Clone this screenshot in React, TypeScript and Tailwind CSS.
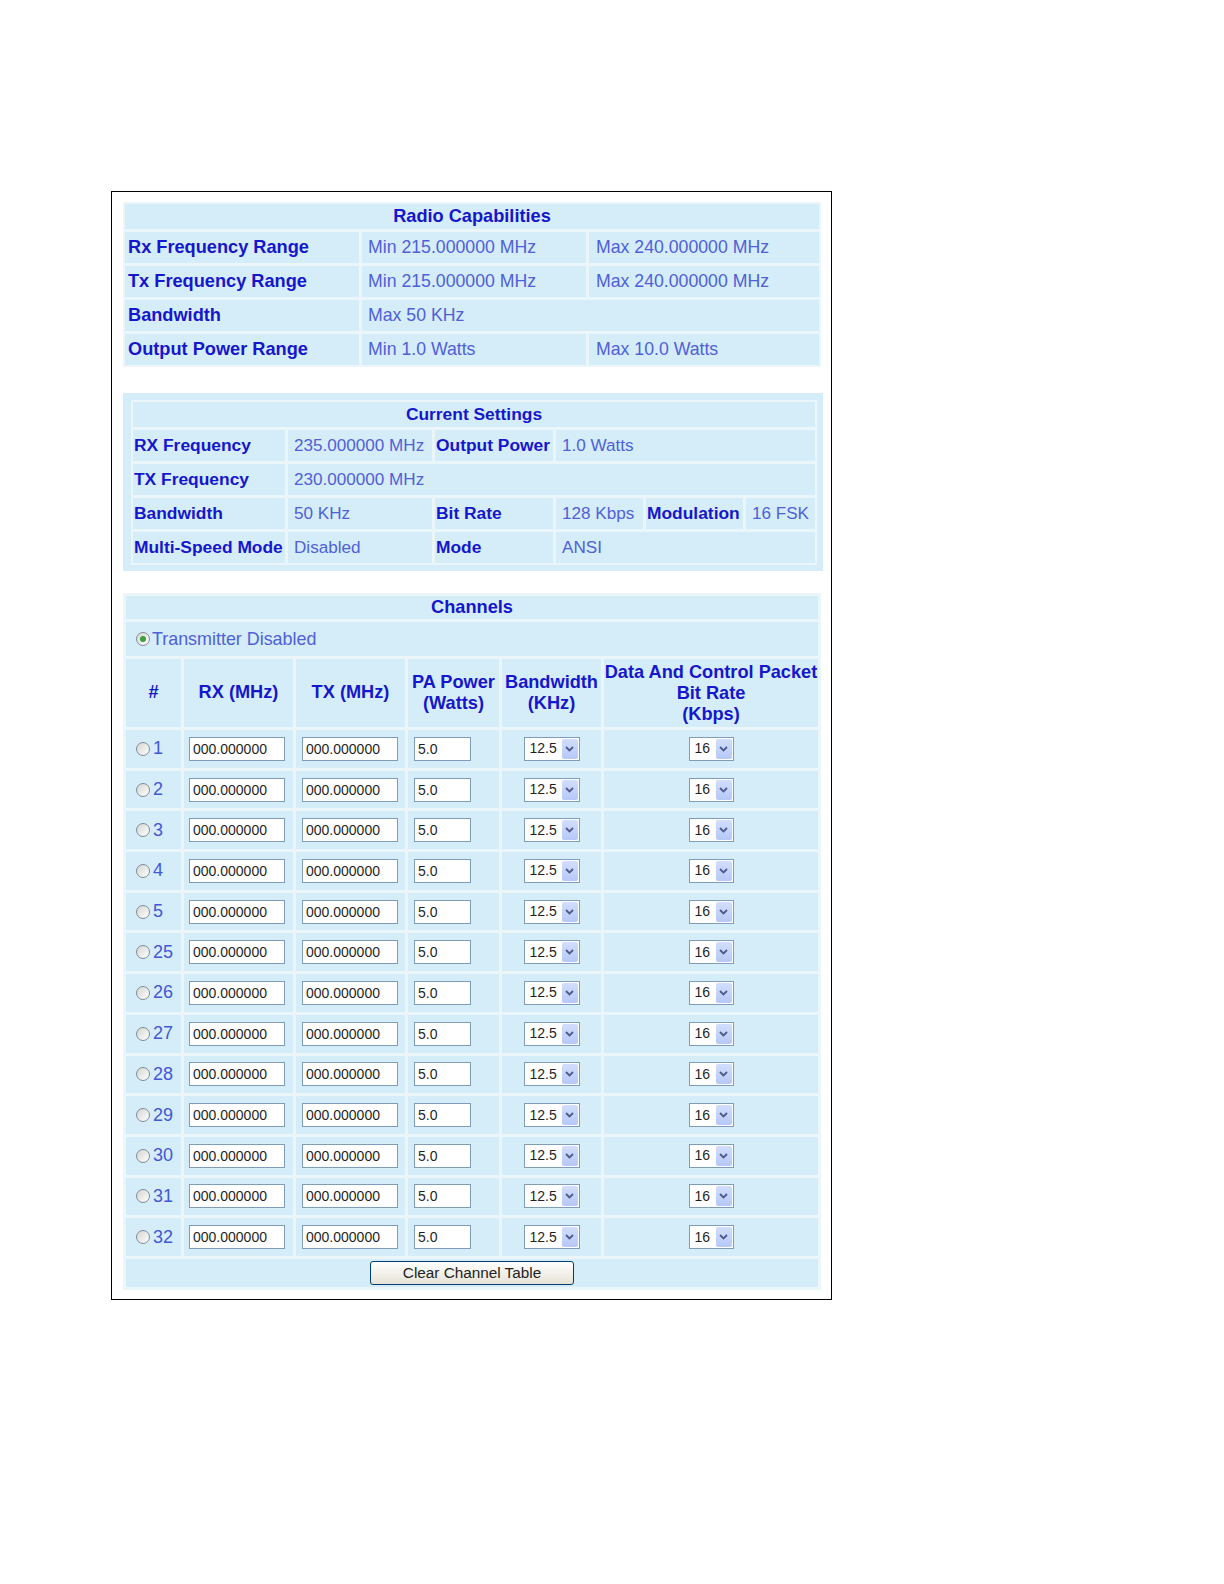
import clsx from 'clsx';
import type { ReactNode } from 'react';

// Radio setup page: capabilities, current settings and channel table.

const CELL = 'bg-[#d5edf8]';
const FRAME = 'bg-[#ebf6fb]';
const LABEL = 'font-bold text-[18.2px] text-[#1616cc]';
const LABEL_SM = 'font-bold text-[17.4px] text-[#1616cc]';
const VALUE = 'text-[17.7px] text-[#4f60d8]';
const VALUE_SM = 'text-[17.1px] text-[#4f60d8]';

const CHANNELS = ['1', '2', '3', '4', '5', '25', '26', '27', '28', '29', '30', '31', '32'];

function Cell({ children, className }: { children?: ReactNode; className?: string }) {
  return <div className={clsx(CELL, 'flex items-center whitespace-nowrap', className)}>{children}</div>;
}

function Radio({ checked = false }: { checked?: boolean }) {
  return (
    <span className="flex h-[14px] w-[14px] shrink-0 items-center justify-center rounded-full border border-[#7f8c98] bg-gradient-to-br from-[#d3d6d2] to-white">
      {checked && <span className="h-[6px] w-[6px] rounded-full bg-[#3c9f3c]" />}
    </span>
  );
}

function TextBox({ value, width }: { value: string; width: string }) {
  return (
    <input
      readOnly
      defaultValue={value}
      className={clsx(
        'h-[24px] border border-[#7f9db9] bg-white pl-[3px] text-[14px] text-[#1f1f1f] outline-none',
        width,
      )}
    />
  );
}

function DropDown({ value, width }: { value: string; width: string }) {
  return (
    <div className={clsx('flex h-[24px] items-center border border-[#7f9db9] bg-white', width)}>
      <span className="flex-1 pl-[5px] text-[14px] text-[#1f1f1f]">{value}</span>
      <span className="mr-[1px] flex h-[20px] w-[16px] items-center justify-center rounded-[2px] bg-gradient-to-b from-[#d2defd] to-[#b6c8f8]">
        <svg width="9" height="6" viewBox="0 0 9 6" aria-hidden>
          <path d="M1 1 L4.5 4.5 L8 1" fill="none" stroke="#4d5b8c" strokeWidth="1.8" />
        </svg>
      </span>
    </div>
  );
}

function RadioCapabilities() {
  const rows: [string, string, string | null][] = [
    ['Rx Frequency Range', 'Min 215.000000 MHz', 'Max 240.000000 MHz'],
    ['Tx Frequency Range', 'Min 215.000000 MHz', 'Max 240.000000 MHz'],
    ['Bandwidth', 'Max 50 KHz', null],
    ['Output Power Range', 'Min 1.0 Watts', 'Max 10.0 Watts'],
  ];
  return (
    <section className={clsx('grid w-[698px] grid-cols-[234px_224px_1fr] gap-[3px] p-[2px]', FRAME)}>
      <Cell className={clsx('col-span-3 h-[25px] justify-center', LABEL)}>Radio Capabilities</Cell>
      {rows.map(([label, a, b]) => (
        <div key={label} className="contents">
          <Cell className={clsx('h-[31px] px-[3px]', LABEL)}>{label}</Cell>
          <Cell className={clsx('px-[6px]', VALUE, b === null && 'col-span-2')}>{a}</Cell>
          {b !== null && <Cell className={clsx('px-[7px]', VALUE)}>{b}</Cell>}
        </div>
      ))}
    </section>
  );
}

function CurrentSettings() {
  return (
    <section className={clsx('w-[700px] pb-[6px] pl-[8px] pr-[6px] pt-[7px]', CELL)}>
      <div className={clsx('grid grid-cols-[152px_144px_118px_87px_97px_1fr] gap-[3px] p-[2px]', FRAME)}>
        <Cell className={clsx('col-span-6 h-[25px] justify-center', LABEL_SM)}>Current Settings</Cell>

        <Cell className={clsx('h-[31px] px-[1px]', LABEL_SM)}>RX Frequency</Cell>
        <Cell className={clsx('px-[6px]', VALUE_SM)}>235.000000 MHz</Cell>
        <Cell className={clsx('px-[1px]', LABEL_SM)}>Output Power</Cell>
        <Cell className={clsx('col-span-3 px-[6px]', VALUE_SM)}>1.0 Watts</Cell>

        <Cell className={clsx('h-[31px] px-[1px]', LABEL_SM)}>TX Frequency</Cell>
        <Cell className={clsx('col-span-5 px-[6px]', VALUE_SM)}>230.000000 MHz</Cell>

        <Cell className={clsx('h-[31px] px-[1px]', LABEL_SM)}>Bandwidth</Cell>
        <Cell className={clsx('px-[6px]', VALUE_SM)}>50 KHz</Cell>
        <Cell className={clsx('px-[1px]', LABEL_SM)}>Bit Rate</Cell>
        <Cell className={clsx('px-[6px]', VALUE_SM)}>128 Kbps</Cell>
        <Cell className={clsx('px-[1px]', LABEL_SM)}>Modulation</Cell>
        <Cell className={clsx('px-[6px]', VALUE_SM)}>16 FSK</Cell>

        <Cell className={clsx('h-[31px] px-[1px]', LABEL_SM)}>Multi-Speed Mode</Cell>
        <Cell className={clsx('px-[6px]', VALUE_SM)}>Disabled</Cell>
        <Cell className={clsx('px-[1px]', LABEL_SM)}>Mode</Cell>
        <Cell className={clsx('col-span-3 px-[6px]', VALUE_SM)}>ANSI</Cell>
      </div>
    </section>
  );
}

function Channels() {
  return (
    <section className={clsx('grid w-[698px] grid-cols-[55px_109px_109px_91px_99px_1fr] gap-[3px] p-[3px]', FRAME)}>
      <Cell className={clsx('col-span-6 h-[23px] justify-center', LABEL)}>Channels</Cell>
      <Cell className="col-span-6 h-[34px] gap-[2px] pl-[10px]">
        <Radio checked />
        <span className="text-[17.9px] text-[#4f60d8]">Transmitter Disabled</span>
      </Cell>

      <Cell className={clsx('h-[68px] justify-center', LABEL)}>#</Cell>
      <Cell className={clsx('justify-center', LABEL)}>RX (MHz)</Cell>
      <Cell className={clsx('justify-center', LABEL)}>TX (MHz)</Cell>
      <Cell className={clsx('justify-center text-center leading-[21px]', LABEL)}>
        PA Power
        <br />
        (Watts)
      </Cell>
      <Cell className={clsx('justify-center text-center leading-[21px]', LABEL)}>
        Bandwidth
        <br />
        (KHz)
      </Cell>
      <Cell className={clsx('justify-center text-center leading-[21px]', LABEL)}>
        Data And Control Packet
        <br />
        Bit Rate
        <br />
        (Kbps)
      </Cell>

      {CHANNELS.map((ch) => (
        <div key={ch} className="contents">
          <Cell className="h-[37.7px] gap-[3px] pl-[10px]">
            <Radio />
            <span className="text-[18px] text-[#4356d9]">{ch}</span>
          </Cell>
          <Cell className="pl-[5px]">
            <TextBox value="000.000000" width="w-[96px]" />
          </Cell>
          <Cell className="pl-[6px]">
            <TextBox value="000.000000" width="w-[96px]" />
          </Cell>
          <Cell className="pl-[6px]">
            <TextBox value="5.0" width="w-[57px]" />
          </Cell>
          <Cell className="justify-center">
            <DropDown value="12.5" width="w-[56px]" />
          </Cell>
          <Cell className="justify-center">
            <DropDown value="16" width="w-[45px]" />
          </Cell>
        </div>
      ))}

      <Cell className="col-span-6 h-[28px] items-start justify-center pt-[2px]">
        <button
          type="button"
          className="h-[24px] w-[204px] rounded-[3px] border border-[#003c74] bg-gradient-to-b from-white to-[#e6e3d6] text-[15.3px] text-[#222]"
        >
          Clear Channel Table
        </button>
      </Cell>
    </section>
  );
}

export default function App() {
  return (
    <div className="min-h-[1584px] w-[1224px] bg-white pl-[111px] pt-[191px] font-['Liberation_Sans',Arial,sans-serif]">
      <div className="flex h-[1109px] w-[721px] flex-col border border-black pl-[11px] pt-[10px]">
        <RadioCapabilities />
        <div className="h-[26px] shrink-0" />
        <CurrentSettings />
        <div className="h-[22px] shrink-0" />
        <Channels />
      </div>
    </div>
  );
}
